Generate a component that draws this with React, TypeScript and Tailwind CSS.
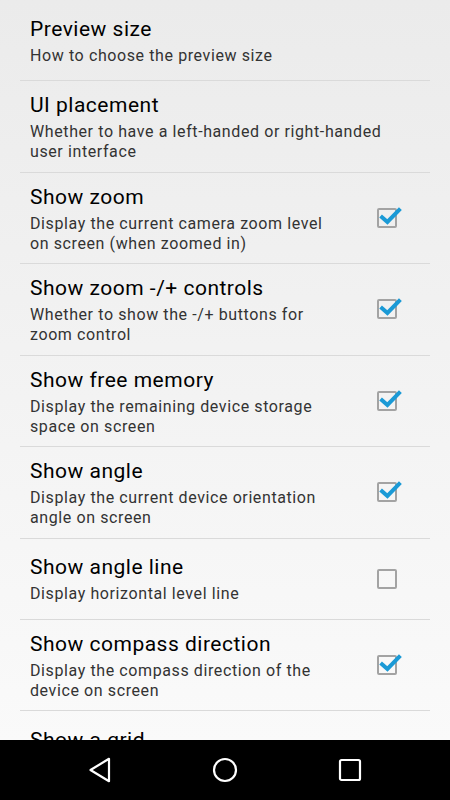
import { ReactNode } from 'react'

interface PrefItem {
  title: string
  summary: string
  checked?: boolean
}

const items: PrefItem[] = [
  { title: 'Preview size', summary: 'How to choose the preview size' },
  { title: 'UI placement', summary: 'Whether to have a left-handed or right-handed user interface' },
  { title: 'Show zoom', summary: 'Display the current camera zoom level on screen (when zoomed in)', checked: true },
  { title: 'Show zoom -/+ controls', summary: 'Whether to show the -/+ buttons for zoom control', checked: true },
  { title: 'Show free memory', summary: 'Display the remaining device storage space on screen', checked: true },
  { title: 'Show angle', summary: 'Display the current device orientation angle on screen', checked: true },
  { title: 'Show angle line', summary: 'Display horizontal level line', checked: false },
  { title: 'Show compass direction', summary: 'Display the compass direction of the device on screen', checked: true },
  { title: 'Show a grid', summary: 'Display a grid on the preview', checked: false },
]

function CheckBox({ checked }: { checked: boolean }) {
  return (
    <svg width="20" height="20" viewBox="0 0 20 20" className="overflow-visible">
      <rect x="1" y="1" width="18" height="18" rx="1" fill="none" stroke="#a3a3a3" strokeWidth="2" />
      {checked && (
        <path
          d="M3.6 8 L10.4 14 L23.4 0.6"
          fill="none"
          stroke="#1b9ad6"
          strokeWidth="4"
          strokeLinejoin="miter"
        />
      )}
    </svg>
  )
}

function PrefRow({ item, last }: { item: PrefItem; last: boolean }) {
  const hasWidget = item.checked !== undefined
  let widget: ReactNode = null
  if (hasWidget) widget = <CheckBox checked={!!item.checked} />

  return (
    <div className={last ? '' : 'border-b border-[#dadada]'}>
      <div className="flex min-h-[80px] items-center">
        <div className={`flex-1 pl-[10px] pt-[11px] pb-[9.5px] ${hasWidget ? '' : 'pr-[24px]'}`}>
          <div className="text-[21px] leading-[26px] tracking-[0.5px] text-black">{item.title}</div>
          <div className="mt-[4px] text-[16px] leading-[20px] tracking-[0.6px] text-[#333333]">{item.summary}</div>
        </div>
        {hasWidget && <div className="flex w-[86px] shrink-0 justify-center">{widget}</div>}
      </div>
    </div>
  )
}

function NavBar() {
  return (
    <div className="flex h-[60px] shrink-0 items-center justify-center gap-[100px] bg-black">
      <svg width="24" height="26" viewBox="0 0 24 26">
        <path d="M21 1.8 L21 24.2 L2.5 13 Z" fill="none" stroke="#fff" strokeWidth="2.2" strokeLinejoin="round" />
      </svg>
      <svg width="26" height="26" viewBox="0 0 26 26">
        <circle cx="13" cy="13" r="11" fill="none" stroke="#fff" strokeWidth="2.2" />
      </svg>
      <svg width="24" height="24" viewBox="0 0 24 24">
        <rect x="2" y="2" width="20" height="20" rx="1.5" fill="none" stroke="#fff" strokeWidth="2.2" />
      </svg>
    </div>
  )
}

export default function App() {
  return (
    <div
      className="flex h-[800px] w-[450px] flex-col overflow-hidden"
      style={{ fontFamily: 'Roboto, "Noto Sans", sans-serif' }}
    >
      <div className="flex-1 overflow-hidden bg-gradient-to-b from-[#ebebeb] to-[#fafafa]">
        <div className="mx-[20px]">
          {items.map((item, i) => (
            <PrefRow key={item.title} item={item} last={i === items.length - 1} />
          ))}
        </div>
      </div>
      <NavBar />
    </div>
  )
}
